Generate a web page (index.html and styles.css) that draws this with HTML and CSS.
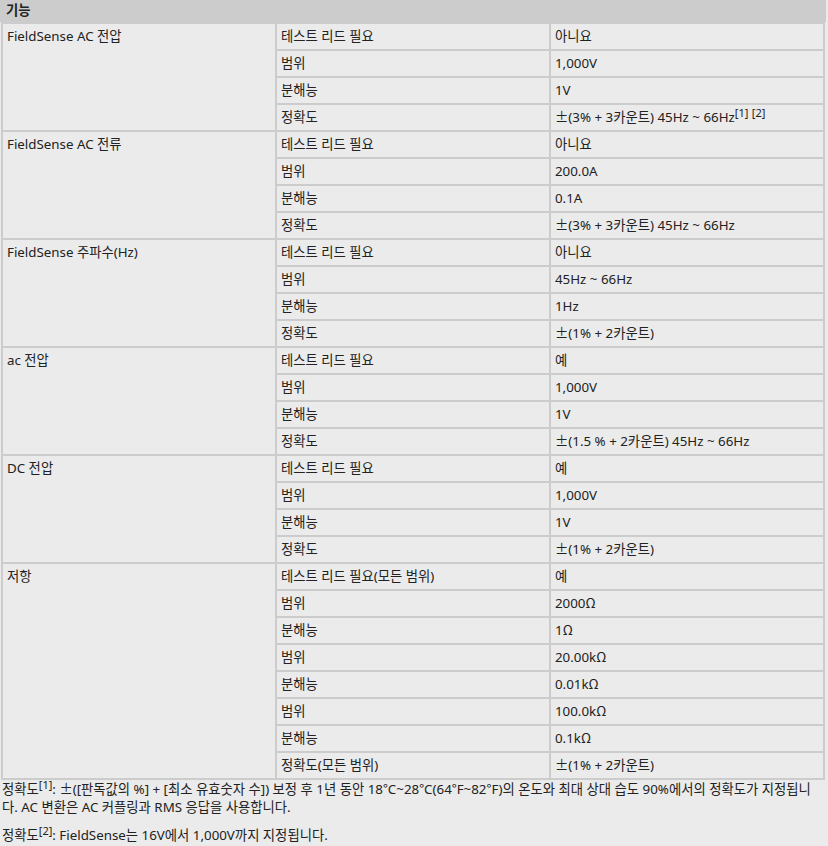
FILE: index.html
```html
<!DOCTYPE html>
<html lang="ko">
<head>
<meta charset="utf-8">
<link rel="stylesheet" href="styles.css">
</head>
<body>
<div class="spec">
  <div class="spec-head">기능</div>
  <table class="spec-table">
    <tbody>
      <tr><td class="fn" rowspan="4">FieldSense AC 전압</td><td class="k">테스트 리드 필요</td><td class="v">아니요</td></tr>
      <tr><td class="k">범위</td><td class="v">1,000V</td></tr>
      <tr><td class="k">분해능</td><td class="v">1V</td></tr>
      <tr><td class="k">정확도</td><td class="v"><span class="cjk">±</span>(3% + 3카운트) 45Hz ~ 66Hz<sup>[1]</sup> <sup>[2]</sup></td></tr>

      <tr><td class="fn" rowspan="4">FieldSense AC 전류</td><td class="k">테스트 리드 필요</td><td class="v">아니요</td></tr>
      <tr><td class="k">범위</td><td class="v">200.0A</td></tr>
      <tr><td class="k">분해능</td><td class="v">0.1A</td></tr>
      <tr><td class="k">정확도</td><td class="v"><span class="cjk">±</span>(3% + 3카운트) 45Hz ~ 66Hz</td></tr>

      <tr><td class="fn" rowspan="4">FieldSense 주파수(Hz)</td><td class="k">테스트 리드 필요</td><td class="v">아니요</td></tr>
      <tr><td class="k">범위</td><td class="v">45Hz ~ 66Hz</td></tr>
      <tr><td class="k">분해능</td><td class="v">1Hz</td></tr>
      <tr><td class="k">정확도</td><td class="v"><span class="cjk">±</span>(1% + 2카운트)</td></tr>

      <tr><td class="fn" rowspan="4">ac 전압</td><td class="k">테스트 리드 필요</td><td class="v">예</td></tr>
      <tr><td class="k">범위</td><td class="v">1,000V</td></tr>
      <tr><td class="k">분해능</td><td class="v">1V</td></tr>
      <tr><td class="k">정확도</td><td class="v"><span class="cjk">±</span>(1.5 % + 2카운트) 45Hz ~ 66Hz</td></tr>

      <tr><td class="fn" rowspan="4">DC 전압</td><td class="k">테스트 리드 필요</td><td class="v">예</td></tr>
      <tr><td class="k">범위</td><td class="v">1,000V</td></tr>
      <tr><td class="k">분해능</td><td class="v">1V</td></tr>
      <tr><td class="k">정확도</td><td class="v"><span class="cjk">±</span>(1% + 2카운트)</td></tr>

      <tr><td class="fn" rowspan="8">저항</td><td class="k">테스트 리드 필요(모든 범위)</td><td class="v">예</td></tr>
      <tr><td class="k">범위</td><td class="v">2000<span class="cjk">Ω</span></td></tr>
      <tr><td class="k">분해능</td><td class="v">1<span class="cjk">Ω</span></td></tr>
      <tr><td class="k">범위</td><td class="v">20.00k<span class="cjk">Ω</span></td></tr>
      <tr><td class="k">분해능</td><td class="v">0.01k<span class="cjk">Ω</span></td></tr>
      <tr><td class="k">범위</td><td class="v">100.0k<span class="cjk">Ω</span></td></tr>
      <tr><td class="k">분해능</td><td class="v">0.1k<span class="cjk">Ω</span></td></tr>
      <tr><td class="k">정확도(모든 범위)</td><td class="v"><span class="cjk">±</span>(1% + 2카운트)</td></tr>
    </tbody>
  </table>
  <p class="note">정확도<sup>[1]</sup>: <span class="cjk">±</span>([판독값의 %] + [최소 유효숫자 수]) 보정 후 1년 동안 18<span class="cjk">°</span>C~28<span class="cjk">°</span>C(64<span class="cjk">°</span>F~82<span class="cjk">°</span>F)의 온도와 최대 상대 습도 90%에서의 정확도가 지정됩니다. AC 변환은 AC 커플링과 RMS 응답을 사용합니다.</p>
  <p class="note">정확도<sup>[2]</sup>: FieldSense는 16V에서 1,000V까지 지정됩니다.</p>
</div>
</body>
</html>
```

FILE: styles.css
```css
html, body {
  margin: 0;
  padding: 0;
  background: #ebebeb;
}
body {
  font-family: "Noto Sans", "Noto Sans CJK KR", sans-serif;
  font-size: 13.333px;
  color: #222;
}
.cjk {
  font-family: "Noto Sans CJK KR", sans-serif;
}
.spec {
  width: 826px;
}
.spec-head {
  background: #cccccc;
  height: 22px;
  line-height: 20px;
  padding-left: 6px;
  font-weight: bold;
  box-sizing: border-box;
}
.spec-table {
  width: 824px;
  margin-left: 1px;
  border-collapse: separate;
  border-spacing: 2px;
  background: #cccccc;
  table-layout: fixed;
}
.spec-table td {
  background: #ebebeb;
  height: 25px;
  padding: 4px 4px 0 4px;
  box-sizing: border-box;
  line-height: 16px;
  white-space: nowrap;
  vertical-align: top;
}
.spec-table td.fn {
  width: 272px;
}
.spec-table td.k {
  width: 272px;
}
sup {
  font-size: 11px;
  line-height: 0;
  vertical-align: 5px;
}
.note {
  margin: 0 0 10px 0;
  padding: 0 2px;
  line-height: 18px;
}
```
